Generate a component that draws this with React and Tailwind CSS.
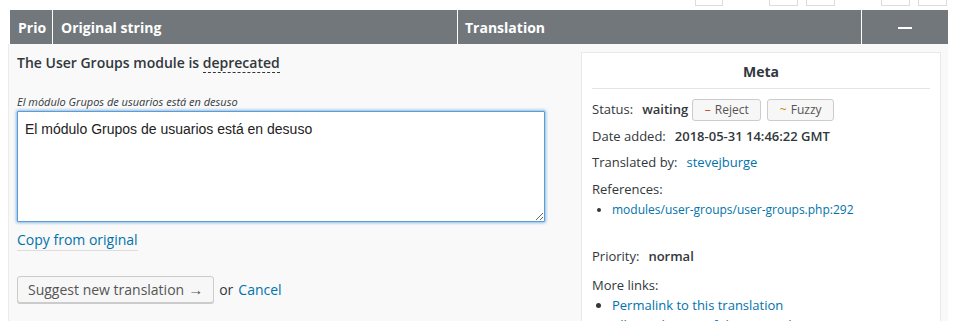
import React from 'react'

const pageBoxes = [
  { left: 695, w: 28 },
  { left: 769, w: 29 },
  { left: 806, w: 29 },
  { left: 881, w: 29 },
  { left: 918, w: 29 },
]

const MetaRow = ({ label, children, className = '' }) => (
  <div className={`flex items-center ${className}`}>
    <span className='mr-[9px]'>{label}</span>
    {children}
  </div>
)

export default function App() {
  return (
    <div className="w-[962px] h-[321px] overflow-hidden bg-white text-[#32373c]" style={{ fontFamily: '"Open Sans", sans-serif' }}>
      {/* pagination remnants */}
      <div className='relative h-[10px]'>
        {pageBoxes.map((b, i) => (
          <div key={i} className='absolute top-[-8px] h-[14px] border border-[#dcdcdc] bg-white' style={{ left: b.left, width: b.w }} />
        ))}
      </div>

      <div className='ml-[10px] w-[938px]'>
        {/* header */}
        <div className='flex h-[34px] bg-[#72777c] text-white text-[14px] font-bold'>
          <div className='w-[43px] flex items-center pl-[8px] border-r border-white'>Prio</div>
          <div className='w-[405px] flex items-center pl-[8px] border-r border-white'>Original string</div>
          <div className='w-[404px] flex items-center pl-[7px] border-r border-white'>Translation</div>
          <div className='flex-1 flex items-center justify-center'>
            <span className='block w-[14px] h-[2px] bg-white mt-[1px]' />
          </div>
        </div>

        {/* body */}
        <div className='flex bg-[#f9f9f9] h-[277px] border-l border-[#ececec] ml-[-2px] pl-[1px]'>
          {/* editor */}
          <div className='w-[571px] pl-[7px] pt-[9px]'>
            <div className='text-[14px] font-semibold leading-[20px]'>
              The User Groups module is{' '}
              <span className='border-b border-dashed border-[#32373c]'>deprecated</span>
            </div>
            <div className='mt-[21px] text-[11px] italic leading-[15px]'>El módulo Grupos de usuarios está en desuso</div>
            <textarea
              className='mt-[2px] block w-[528px] h-[111px] bg-white border border-[#5b9dd9] shadow-[0_0_3px_1px_rgba(91,157,217,0.7)] rounded-[1px] px-[7px] py-[8px] text-[14px] leading-[18px] text-[#222] outline-none resize-y'
              style={{ fontFamily: '"Liberation Sans", Arial, sans-serif' }}
              defaultValue='El módulo Grupos de usuarios está en desuso'
            />
            <div className='mt-[5px]'>
              <a className='text-[14px] text-[#0073aa] border-b border-[#dddddd] leading-[20px] pb-[1px]'>Copy from original</a>
            </div>
            <div className='mt-[25px] flex items-center text-[14px]'>
              <button className='h-[27px] px-[10px] bg-[#f7f7f7] border border-[#cccccc] rounded-[3px] shadow-[0_1px_0_#cccccc] text-[14px] text-[#555] leading-none flex items-center'>
                Suggest new translation<span className='ml-[4px] text-[15px]'>→</span>
              </button>
              <span className='ml-[5px]'>or</span>
              <a className='ml-[5px] text-[#0073aa]'>Cancel</a>
            </div>
          </div>

          {/* meta */}
          <div className='pt-[8px]'>
            <div className='w-[360px] h-[290px] bg-white border border-[#e9e9e9] px-[10px] text-[13px]'>
              <div className='text-center font-bold text-[14px] pt-[8px] pb-[6px] border-b border-[#e5e5e5]'>Meta</div>
              <MetaRow label='Status:' className='mt-[10px]'>
                <strong className='font-semibold mr-[4px]'>waiting</strong>
                <button className='h-[22px] w-[69px] bg-[#f7f7f7] border border-[#cccccc] rounded-[3px] text-[12px] text-[#555] flex items-center justify-center'>
                  <span className='text-[#c3542a] mr-[4px]'>–</span>Reject
                </button>
                <button className='ml-[6px] h-[22px] w-[67px] bg-[#f7f7f7] border border-[#cccccc] rounded-[3px] text-[12px] text-[#555] flex items-center justify-center'>
                  <span className='text-[#d98500] mr-[4px]'>~</span>Fuzzy
                </button>
              </MetaRow>
              <MetaRow label='Date added:' className='mt-[6px] h-[20px]'>
                <strong className='font-semibold'>2018-05-31 14:46:22 GMT</strong>
              </MetaRow>
              <MetaRow label='Translated by:' className='mt-[6px] h-[20px]'>
                <a className='text-[#0073aa]'>stevejburge</a>
              </MetaRow>
              <div className='mt-[6px] h-[20px] leading-[20px]'>References:</div>
              <ul className='list-disc pl-[20px] text-[12px] leading-[20px] marker:text-[#32373c]'>
                <li className='mt-[1px]'><a className='text-[#0073aa]'>modules/user-groups/user-groups.php:292</a></li>
              </ul>
              <MetaRow label='Priority:' className='mt-[27px] h-[20px]'>
                <strong className='font-semibold'>normal</strong>
              </MetaRow>
              <div className='mt-[8px] h-[20px] leading-[20px]'>More links:</div>
              <ul className='list-disc pl-[20px] leading-[20px]'>
                <li><a className='text-[#0073aa]'>Permalink to this translation</a></li>
                <li><a className='text-[#0073aa]'>All translations of this original</a></li>
              </ul>
            </div>
          </div>
        </div>
      </div>
    </div>
  )
}
